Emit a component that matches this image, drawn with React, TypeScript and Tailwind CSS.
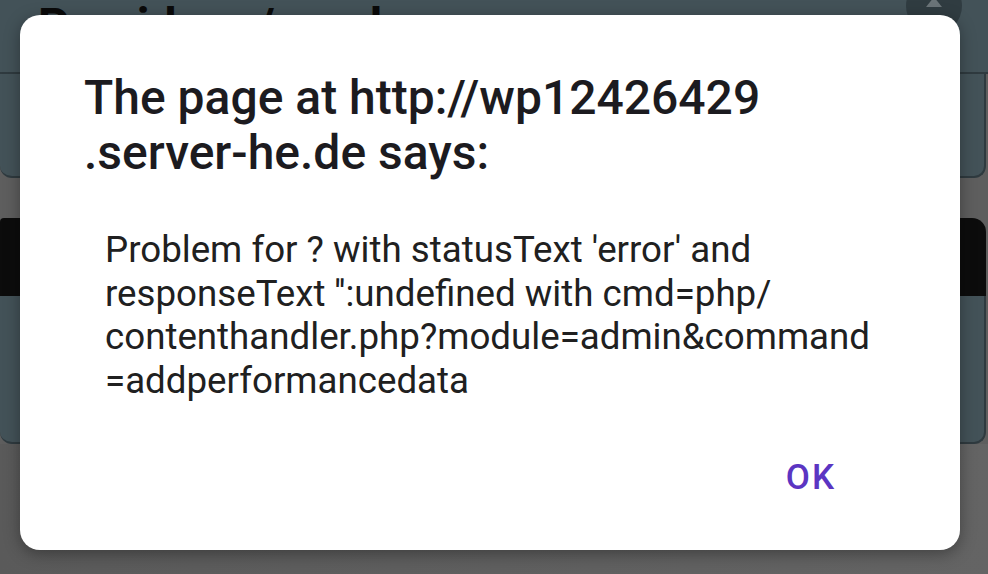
import React from "react";

function ScrollBadge() {
  return (
    <div className="absolute right-[26px] top-[-22px] flex h-[56px] w-[56px] items-center justify-center rounded-full bg-[#303c41]">
      <svg width="22" height="22" viewBox="0 0 22 22">
        <path d="M11 2 L19 12 H3 Z" fill="#6b7478" />
      </svg>
    </div>
  );
}

export default function App() {
  return (
    <div className="relative h-[574px] w-[988px] overflow-hidden bg-[#5e5e5e] font-['Roboto',sans-serif]">
      {/* page behind the dimmed overlay */}
      <div className="flex flex-col">
        <div className="relative h-[74px] border-b-2 border-[#2f3a3f] bg-[#435258] pl-[38px]">
          <span className="block text-[48px] font-bold leading-[52px] text-[#0a0a0a]">
            Providers / mode
          </span>
          <ScrollBadge />
        </div>
        <div className="relative mr-[2px] h-[104px] rounded-b-[12px] border-b-2 border-r-2 border-[#2f3a3f] bg-[#435258]">
          <div className="absolute right-[24px] top-[30px] h-[60px] w-[60px] rounded-full bg-[#36434a]" />
        </div>
        <div className="h-[40px]" />
        <div className="mr-[2px] h-[78px] rounded-tr-[14px] rounded-tl-[4px] bg-[#0c0c0c]" />
        <div className="relative mr-[2px] h-[148px] rounded-b-[12px] border-b-2 border-r-2 border-[#2f3a3f] bg-[#435258]">
          <div className="absolute right-[24px] top-[44px] h-[60px] w-[60px] rounded-full bg-[#36434a]" />
        </div>
        <div className="h-[130px] bg-gradient-to-r from-[#5a5a5a] to-[#646464]" />
      </div>

      {/* alert dialog */}
      <div className="absolute left-[20px] top-[15px] flex h-[535px] w-[940px] flex-col rounded-[20px] bg-white shadow-[0_4px_16px_rgba(0,0,0,0.35)]">
        <h1 className="pl-[64px] pr-[40px] pt-[55px] text-[48px] font-medium leading-[55px] text-[#1c1b1f]">
          The page at http://wp12426429
          <br />
          .server-he.de says:
        </h1>
        <p className="mt-[48px] pl-[85px] pr-[40px] text-[36.7px] leading-[43.5px] text-[#202020]">
          Problem for ? with statusText 'error' and
          <br />
          responseText '':undefined with cmd=php/
          <br />
          contenthandler.php?module=admin&amp;command
          <br />
          =addperformancedata
        </p>
        <div className="mt-auto flex justify-end pb-[52px] pr-[124px]">
          <button className="text-[35px] font-medium leading-[40px] tracking-[2px] text-[#5b35c2]">OK</button>
        </div>
      </div>
    </div>
  );
}
